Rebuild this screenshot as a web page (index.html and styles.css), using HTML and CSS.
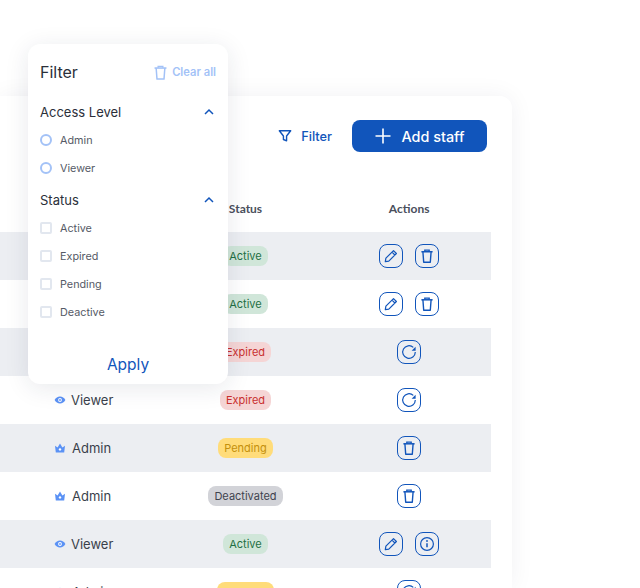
FILE: index.html

```html
<!DOCTYPE html>
<html lang="en">
<head>
    <meta charset="UTF-8">
    <meta name="viewport" content="width=device-width, initial-scale=1.0">
    <title>Staff</title>
    <link rel="stylesheet" href="styles.css">
</head>
<body>
    <svg class="icon-defs" width="0" height="0">
        <symbol id="i-pen" viewBox="0 0 16 16">
            <path d="M10.500 2.600l2.900 2.900-7.600 7.600-3.500.6.600-3.500z M9 4.100l2.900 2.900" fill="none" stroke="currentColor" stroke-width="1.200" stroke-linejoin="round"/>
        </symbol>
        <symbol id="i-trash" viewBox="0 0 16 16">
            <path d="M2.400 3.800h11.200" fill="none" stroke="currentColor" stroke-width="1.500"/>
            <path d="M5.800 3.600V2.200h4.400v1.400" fill="none" stroke="currentColor" stroke-width="1.300"/>
            <path d="M3.900 3.800l.8 10.400h6.600l.8-10.400" fill="none" stroke="currentColor" stroke-width="1.400" stroke-linejoin="round"/>
        </symbol>
        <symbol id="i-refresh" viewBox="0 0 16 16">
            <path d="M14.300 8a6.300 6.300 0 1 1-2-4.600" fill="none" stroke="currentColor" stroke-width="1.200"/>
            <path d="M14.600 2.800v4h-4z" fill="currentColor"/>
        </symbol>
        <symbol id="i-info" viewBox="0 0 16 16">
            <circle cx="8" cy="8" r="6.400" fill="none" stroke="currentColor" stroke-width="1.200"/>
            <path d="M8 7.200v4" stroke="currentColor" stroke-width="1.500"/>
            <circle cx="8" cy="5" r="0.900" fill="currentColor"/>
        </symbol>
        <symbol id="i-eye" viewBox="0 0 12 12">
            <path d="M.6 6C1.800 3.800 3.700 2.600 6 2.600s4.200 1.200 5.400 3.400C10.200 8.200 8.300 9.400 6 9.400S1.800 8.200.6 6z" fill="currentColor"/>
            <circle cx="6" cy="6" r="1.900" fill="#fff"/>
            <circle cx="6" cy="6" r="0.900" fill="currentColor"/>
        </symbol>
        <symbol id="i-crown" viewBox="0 0 12 12">
            <path d="M1 3.800l2.600 1.700L6 1.600l2.400 3.900L11 3.800l-.8 6.600H1.800z" fill="currentColor"/>
            <circle cx="6" cy="7.400" r="1.200" fill="#fff"/>
        </symbol>
        <symbol id="i-chevron" viewBox="0 0 12 12">
            <path d="M2 8l4-4 4 4" fill="none" stroke="currentColor" stroke-width="1.500"/>
        </symbol>
    </svg>

    <div class="card">
        <div class="toolbar">
            <button class="filter-btn">
                <svg width="14" height="14" viewBox="0 0 16 16"><path d="M1.500 2h13L9.800 8v5.500l-3.600-1.500V8z" fill="none" stroke="currentColor" stroke-width="1.600" stroke-linejoin="round"/></svg>
                Filter
            </button>
            <button class="add-btn">
                <svg width="16" height="16" viewBox="0 0 16 16"><path d="M8 0.500v15 M0.500 8h15" stroke="currentColor" stroke-width="1.600"/></svg>
                Add staff
            </button>
        </div>
        <div class="table">
            <div class="row head">
                <div></div>
                <div class="center">Status</div>
                <div class="center">Actions</div>
            </div>
            <div class="row">
                <div></div>
                <div class="center"><span class="badge active">Active</span></div>
                <div class="actions">
                    <button class="act"><svg><use href="#i-pen"/></svg></button>
                    <button class="act"><svg><use href="#i-trash"/></svg></button>
                </div>
            </div>
            <div class="row">
                <div></div>
                <div class="center"><span class="badge active">Active</span></div>
                <div class="actions">
                    <button class="act"><svg><use href="#i-pen"/></svg></button>
                    <button class="act"><svg><use href="#i-trash"/></svg></button>
                </div>
            </div>
            <div class="row">
                <div></div>
                <div class="center"><span class="badge expired">Expired</span></div>
                <div class="actions">
                    <button class="act"><svg><use href="#i-refresh"/></svg></button>
                </div>
            </div>
            <div class="row">
                <div class="role viewer"><svg class="role-icon"><use href="#i-eye"/></svg>Viewer</div>
                <div class="center"><span class="badge expired">Expired</span></div>
                <div class="actions">
                    <button class="act"><svg><use href="#i-refresh"/></svg></button>
                </div>
            </div>
            <div class="row">
                <div class="role"><svg class="role-icon"><use href="#i-crown"/></svg>Admin</div>
                <div class="center"><span class="badge pending">Pending</span></div>
                <div class="actions">
                    <button class="act"><svg><use href="#i-trash"/></svg></button>
                </div>
            </div>
            <div class="row">
                <div class="role"><svg class="role-icon"><use href="#i-crown"/></svg>Admin</div>
                <div class="center"><span class="badge deactivated">Deactivated</span></div>
                <div class="actions">
                    <button class="act"><svg><use href="#i-trash"/></svg></button>
                </div>
            </div>
            <div class="row">
                <div class="role viewer"><svg class="role-icon"><use href="#i-eye"/></svg>Viewer</div>
                <div class="center"><span class="badge active">Active</span></div>
                <div class="actions">
                    <button class="act"><svg><use href="#i-pen"/></svg></button>
                    <button class="act"><svg><use href="#i-info"/></svg></button>
                </div>
            </div>
            <div class="row">
                <div class="role"><svg class="role-icon"><use href="#i-crown"/></svg>Admin</div>
                <div class="center"><span class="badge pending">Suspend</span></div>
                <div class="actions">
                    <button class="act"><svg><use href="#i-refresh"/></svg></button>
                </div>
            </div>
        </div>
    </div>

    <div class="popover">
        <div class="pop-head">
            <span class="pop-title">Filter</span>
            <span class="clear">
                <svg width="17" height="17"><use href="#i-trash"/></svg>
                Clear all
            </span>
        </div>
        <div class="group-head">Access Level <svg width="12" height="12"><use href="#i-chevron"/></svg></div>
        <div class="option"><span class="radio"></span>Admin</div>
        <div class="option"><span class="radio"></span>Viewer</div>
        <div class="group-head">Status <svg width="12" height="12"><use href="#i-chevron"/></svg></div>
        <div class="option"><span class="check"></span>Active</div>
        <div class="option"><span class="check"></span>Expired</div>
        <div class="option"><span class="check"></span>Pending</div>
        <div class="option"><span class="check"></span>Deactive</div>
        <div class="apply">Apply</div>
    </div>
</body>
</html>
```

FILE: styles.css

```css
html, body {
    margin: 0;
    padding: 0;
    height: 588px;
    overflow: hidden;
    background-color: #fff;
}
body {
    position: relative;
    font-family: Inter, "Noto Sans", sans-serif;
    color: #3a3f4b;
}
button {
    font-family: inherit;
    cursor: pointer;
}
.icon-defs {
    position: absolute;
}
.card {
    width: 512px;
    margin-top: 96px;
    padding-top: 24px;
    padding-right: 21px;
    box-sizing: border-box;
    height: 492px;
    overflow: hidden;
    background-color: #fff;
    border-radius: 0 12px 0 0;
    box-shadow: 0 0 24px rgba(30, 40, 70, 0.06);
}
.toolbar {
    display: flex;
    justify-content: flex-end;
    align-items: center;
    gap: 20px;
    padding-right: 4px;
}
.filter-btn {
    display: flex;
    align-items: center;
    gap: 9px;
    padding: 0;
    border: none;
    background: none;
    color: #1155bb;
    font-size: 12.800px;
    font-weight: 500;
}
.add-btn {
    display: flex;
    align-items: center;
    justify-content: center;
    gap: 11px;
    width: 135px;
    height: 32px;
    border: none;
    border-radius: 8px;
    background-color: #1155bb;
    color: #fff;
    font-size: 14.400px;
    font-weight: 500;
}
.table {
    margin-top: 32px;
}
.row {
    display: grid;
    grid-template-columns: repeat(3, 1fr);
    align-items: center;
    height: 48px;
    font-size: 13px;
}
.row:nth-child(even) {
    background-color: #eceef2;
}
.row.head {
    font-family: Lato, sans-serif;
    font-size: 12px;
    font-weight: 700;
    color: #4a4f5c;
}
.center {
    text-align: center;
}
.role {
    display: flex;
    align-items: center;
    gap: 6px;
    padding-left: 54px;
}
.role.viewer {
    gap: 5px;
}
.role-icon {
    width: 12px;
    height: 12px;
    color: #5b92f5;
}
.badge {
    display: inline-block;
    padding: 0 6px;
    height: 20px;
    line-height: 20px;
    border-radius: 8px;
    font-size: 11px;
}
.badge.active {
    background-color: #d0e6d9;
    color: #1f7044;
}
.badge.expired {
    background-color: #f5d5d5;
    color: #c9302f;
}
.badge.pending {
    background-color: #ffdc7a;
    color: #c4900c;
}
.badge.deactivated {
    background-color: #d2d3d8;
    color: #3f434e;
}
.actions {
    display: flex;
    justify-content: center;
    gap: 12px;
}
.act {
    display: flex;
    align-items: center;
    justify-content: center;
    width: 24px;
    height: 24px;
    padding: 0;
    border: 1px solid #1155bb;
    border-radius: 8px;
    background: none;
    color: #1155bb;
}
.act svg {
    width: 16px;
    height: 16px;
}
.popover {
    position: absolute;
    left: 28px;
    top: 44px;
    width: 200px;
    height: 340px;
    box-sizing: border-box;
    padding: 0 12px;
    background-color: #fff;
    border-radius: 12px;
    box-shadow: 0 4px 24px rgba(30, 40, 70, 0.1);
}
.pop-head {
    display: flex;
    justify-content: space-between;
    align-items: center;
    height: 56px;
}
.pop-title {
    font-size: 16px;
    color: #2b2f3a;
}
.clear {
    display: flex;
    align-items: center;
    gap: 3px;
    color: #a3c2f7;
    font-size: 11.200px;
    font-weight: 600;
}
.group-head {
    display: flex;
    justify-content: space-between;
    align-items: center;
    height: 24px;
    margin-bottom: 2px;
    padding-right: 1px;
    font-size: 13px;
    color: #2b2f3a;
}
.group-head svg {
    color: #1155bb;
}
.option + .group-head {
    margin-top: 6px;
}
.option {
    display: flex;
    align-items: center;
    gap: 8px;
    height: 28px;
    font-size: 10.800px;
    color: #555a66;
}
.radio {
    width: 12px;
    height: 12px;
    box-sizing: border-box;
    border: 2px solid #a3c2f7;
    border-radius: 50%;
}
.check {
    width: 12px;
    height: 12px;
    box-sizing: border-box;
    border: 2px solid #e2e7ef;
    border-radius: 2px;
}
.apply {
    margin-top: 29px;
    text-align: center;
    font-size: 15.500px;
    color: #1155bb;
}
```
